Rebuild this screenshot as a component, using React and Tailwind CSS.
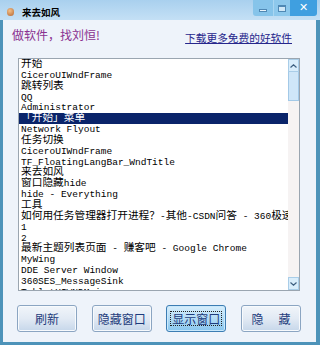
import React from "react";

const items = [
  "开始",
  "CiceroUIWndFrame",
  "跳转列表",
  "QQ",
  "Administrator",
  "「开始」菜单",
  "Network Flyout",
  "任务切换",
  "CiceroUIWndFrame",
  "TF_FloatingLangBar_WndTitle",
  "来去如风",
  "窗口隐藏hide",
  "hide - Everything",
  "工具",
  "如何用任务管理器打开进程？-其他-CSDN问答 - 360极速浏览器",
  "1",
  "2",
  "最新主题列表页面 - 赚客吧 - Google Chrome",
  "MyWing",
  "DDE Server Window",
  "360SES_MessageSink",
  "TabletUIWNDMain",
];

// CJK runs are set a little larger than the monospace latin text
function Txt({ s }) {
  const parts = s.split(/([\u3000-\u9fff\uff00-\uffef]+)/);
  return parts.map((p, i) =>
    i % 2 ? (
      <span key={i} className="text-[10.7px]">{p}</span>
    ) : (
      <span key={i}>{p}</span>
    )
  );
}

function Btn({ children, focus }) {
  return (
    <div
      className={
        focus
          ? "w-[60px] h-[27px] rounded-[3px] border border-[#3c7db3] bg-linear-to-b from-[#d7eefc] via-[#b3dcf6] to-[#86c5ee] flex items-center justify-center shadow-[inset_0_0_0_1px_#c9e8fb]"
          : "w-[60px] h-[27px] rounded-[3px] border border-[#8ba5c2] bg-linear-to-b from-[#f1f5fa] via-[#e2eaf4] to-[#c6d7ea] flex items-center justify-center shadow-[inset_0_0_0_1px_#f7fafd]"
      }
    >
      {children}
    </div>
  );
}

export default function App() {
  return (
    <div className="w-[320px] h-[345px] flex flex-col bg-[#4d93b9] overflow-hidden">
      {/* title bar */}
      <div className="h-[20px] flex bg-linear-to-b from-[#a9d0ee] to-[#c4e0f5]">
        <div className="flex items-center pt-[4px] pl-[7px]">
          <div className="w-[7px] h-[8px] rounded-full bg-[radial-gradient(circle_at_40%_35%,#f3c08a,#b5652e)]" />
          <span className="ml-[8px] text-[9.5px] font-bold text-black font-['Noto_Sans_CJK_SC',sans-serif]">
            来去如风
          </span>
        </div>
        <div className="flex-1" />
        <div className="flex self-start mr-[3px] h-[16px]">
          <div className="w-[20px] h-full bg-[#86c4ea] rounded-bl-[3px] flex items-center justify-center">
            <div className="w-[8px] h-[3px] bg-[#e8f4fc] border border-[#4f88b4] mt-[4px]" />
          </div>
          <div className="w-[17px] h-full bg-[#8dc8ec] border-l border-[#a9d6f2] flex items-center justify-center">
            <div className="w-[8px] h-[7px] border border-[#4f88b4] border-t-2 bg-[#cfe7f7]" />
          </div>
          <div className="w-[27px] h-full bg-[#3f9fe0] rounded-br-[3px] flex items-center justify-center text-white text-[11px] font-bold font-['DejaVu_Sans',sans-serif]">
            ✕
          </div>
        </div>
      </div>

      {/* client */}
      <div className="flex-1 flex flex-col ml-[3px] mr-[4px] mb-[3px] bg-[#eef3fa]">
        <div className="h-[38px] flex font-['Noto_Sans_CJK_SC',sans-serif]">
          <span className="ml-[9px] mt-[7px] text-[12px] leading-[15px] text-[#8a3190]">
            做软件，找刘恒!
          </span>
          <span className="ml-auto mr-[24px] mt-[11px] text-[10.7px] leading-[13px] text-[#26268c] underline">
            下载更多免费的好软件
          </span>
        </div>

        {/* list box */}
        <div className="ml-[15px] w-[282px] h-[233px] border border-[#9aa5b0] bg-white flex">
          <div className="flex-1 overflow-hidden font-['Liberation_Mono','Noto_Sans_CJK_SC',monospace] text-[9.5px] text-black">
            {items.map((s, i) => (
              <div
                key={i}
                className={
                  i === 5
                    ? "h-[10.85px] leading-[11px] pl-[2px] whitespace-nowrap bg-[#0a246a] text-white"
                    : "h-[10.85px] leading-[11px] pl-[2px] whitespace-nowrap"
                }
              >
                <Txt s={s} />
              </div>
            ))}
          </div>
          <div className="w-[11px] flex flex-col bg-[#f6f3f3]">
            <div className="h-[13px] bg-[#d9edfb] border border-[#a9cde8] flex items-center justify-center">
              <svg width="7" height="4" viewBox="0 0 7 4">
                <path d="M0.5 3.5 L3.5 0.8 L6.5 3.5" fill="none" stroke="#3e5f80" strokeWidth="1.2" />
              </svg>
            </div>
            <div className="h-[29px] bg-[#cfe6f8] border border-[#a3c9e7] border-t-0" />
            <div className="flex-1" />
            <div className="h-[13px] bg-[#d9edfb] border border-[#a9cde8] flex items-center justify-center">
              <svg width="7" height="4" viewBox="0 0 7 4">
                <path d="M0.5 0.5 L3.5 3.2 L6.5 0.5" fill="none" stroke="#3e5f80" strokeWidth="1.2" />
              </svg>
            </div>
          </div>
        </div>

        {/* buttons */}
        <div className="mt-[14px] pl-[14px] flex gap-[14.67px] font-['Noto_Sans_CJK_SC',sans-serif] text-[12px] text-[#1e3c7c]">
          <Btn>刷新</Btn>
          <Btn>隐藏窗口</Btn>
          <Btn focus>
            <span className="px-[1px] leading-[13px] outline outline-1 outline-dotted outline-[#222]">
              显示窗口
            </span>
          </Btn>
          <Btn>
            <span className="flex gap-[15px]">
              <span>隐</span>
              <span>藏</span>
            </span>
          </Btn>
        </div>
      </div>
    </div>
  );
}
